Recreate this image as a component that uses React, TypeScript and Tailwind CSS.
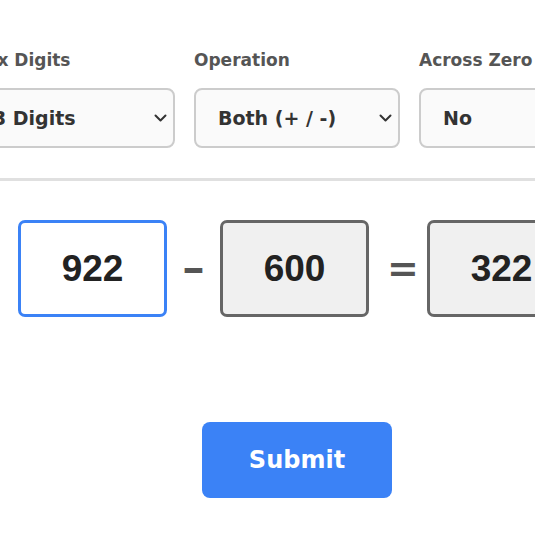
import React from 'react';

const sans = "font-['DejaVu_Sans',sans-serif]";

function Field({ label, value, options }: { label: string; value: string; options: string[] }) {
  return (
    <div className="w-[206px] shrink-0">
      <div className={`${sans} text-[17px] leading-[24px] font-bold text-[#555] mb-[16px] whitespace-nowrap`}>{label}</div>
      <div className="relative">
        <select
          defaultValue={value}
          className={`${sans} appearance-none w-full h-[60px] rounded-lg border-2 border-[#ccc] bg-[#fafafa] pl-[22px] text-[19px] font-bold text-[#333] outline-none`}
        >
          {options.map((o) => (
            <option key={o}>{o}</option>
          ))}
        </select>
        <svg
          className="absolute right-[8px] top-[26px] pointer-events-none"
          width="13"
          height="8"
          viewBox="0 0 13 8"
          fill="none"
        >
          <path d="M1.5 1.5L6.5 6.5L11.5 1.5" stroke="#333" strokeWidth="2" strokeLinecap="round" strokeLinejoin="round" />
        </svg>
      </div>
    </div>
  );
}

function NumBox({ n, active }: { n: string; active?: boolean }) {
  return (
    <div
      className={`w-[149px] h-[97px] shrink-0 rounded-[7px] border-[3px] flex items-center justify-center font-['Liberation_Sans',Arial,sans-serif] text-[37px] font-bold text-[#222] ${
        active ? 'border-[#3b82f6] bg-white' : 'border-[#666] bg-[#f0f0f0]'
      }`}
    >
      {n}
    </div>
  );
}

export default function App() {
  return (
    <div className="w-[535px] h-[535px] overflow-hidden bg-white">
      <div className="w-[594px] pt-[48px]">
        <div className="flex justify-center gap-[19px]">
          <Field label="Max Digits" value="3 Digits" options={['1 Digit', '2 Digits', '3 Digits']} />
          <Field label="Operation" value="Both (+ / -)" options={['Addition (+)', 'Subtraction (-)', 'Both (+ / -)']} />
          <Field label="Across Zero" value="No" options={['No', 'Yes']} />
        </div>

        <div className="h-[3px] bg-[#e0e0e0] mt-[30px] w-full" />

        <div className="flex justify-center items-center gap-[18px] mt-[39px]">
          <NumBox n="922" active />
          <span className={`${sans} w-[17px] text-center text-[36px] font-bold text-[#555] inline-block scale-x-[1.6]`}>-</span>
          <NumBox n="600" />
          <span className={`${sans} w-[22px] text-center text-[38px] font-bold text-[#555]`}>=</span>
          <NumBox n="322" />
        </div>

        <div className="flex justify-center mt-[105px]">
          <button className={`${sans} w-[190px] h-[76px] rounded-lg bg-[#3b82f6] text-white text-[24px] font-bold`}>
            Submit
          </button>
        </div>
      </div>
    </div>
  );
}
